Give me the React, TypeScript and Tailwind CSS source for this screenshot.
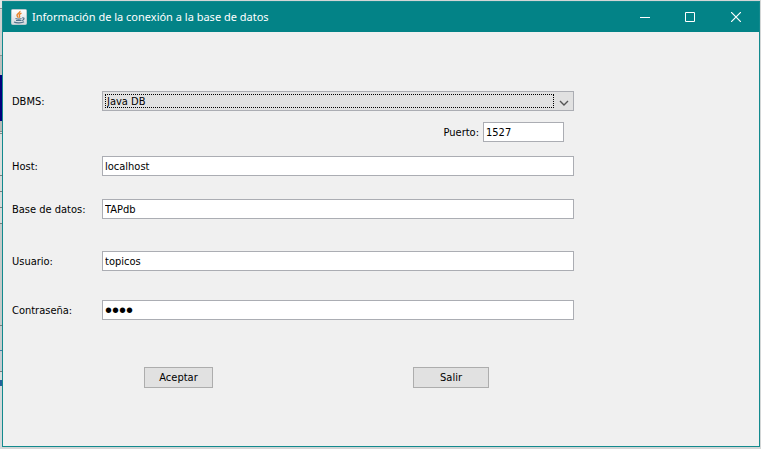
import type { ReactNode } from "react";

const fieldClass =
  "h-5 w-full min-w-0 rounded-none border border-[#abadb3] bg-white px-0.5 text-[11px] leading-4 text-black outline-none";

const passwordClass =
  "h-5 w-full min-w-0 rounded-none border border-[#abadb3] bg-white px-0.5 font-['Liberation_Sans',sans-serif] text-[20px] leading-4 text-black outline-none";

const leftEdge = [
  "h-2 bg-[#e4e6e5]",
  "h-px bg-[#8d9391]",
  "h-px bg-[#d5d8d7]",
  "h-[45px] bg-[#cdd1d0]",
  "h-px bg-[#8d9391]",
  "h-[19px] bg-[#bcbebd]",
  "h-[46px] bg-[#00007c]",
  "h-2.5 bg-[#b8b9b8]",
  "h-px bg-[#858a89]",
  "h-px bg-[#e0e0e0]",
  "h-px bg-[#858a89]",
  "h-[41px] bg-[#dcdedd]",
  "h-px bg-[#777c7b]",
  "h-[15px] bg-[#d8dada]",
  "h-px bg-[#777c7b]",
  "h-[15px] bg-[#d8dada]",
  "h-px bg-[#777c7b]",
  "h-[15px] bg-[#d8dada]",
  "h-px bg-[#777c7b]",
  "h-[101px] bg-[#c6caca]",
  "h-px bg-[#777c7b]",
  "h-6 bg-[#c9cdce]",
  "h-px bg-[#3b7ba5]",
  "h-5 bg-[#c6cbd2]",
  "h-px bg-[#777c7b]",
  "h-2 bg-[#d9dcdd]",
  "h-1.5 bg-[#24609a]",
  "flex-1 bg-[#d5d9db]",
];

function Row({ id, label, className, children }: { id: string; label: string; className: string; children: ReactNode }) {
  return (
    <div className={`flex items-center ${className}`}>
      <label htmlFor={id} className="w-[90px] shrink-0 pt-0.5 whitespace-nowrap">
        {label}
      </label>
      {children}
    </div>
  );
}

function JavaIcon() {
  return (
    <svg width="16" height="16" viewBox="0 0 16 16" className="shrink-0" aria-hidden="true">
      <defs>
        <linearGradient id="tile" x1="0" y1="0" x2="0" y2="1">
          <stop offset="0" stopColor="#ffffff" />
          <stop offset="1" stopColor="#d3dade" />
        </linearGradient>
      </defs>
      <rect x="0.5" y="0.5" width="15" height="15" rx="1" fill="url(#tile)" stroke="#b9c9cc" />
      <path d="M9 2C9.500 4 5.500 4.800 6 6.500C6.200 7.300 7 7.700 7 8.700M10.500 4.200C8.300 5 7.900 6 8.500 6.800C9 7.500 8.600 8 8.100 8.700" fill="none" stroke="#e8842c" strokeWidth="1.400" />
      <path d="M4.500 9.500C6.500 10.300 9.500 10.100 10.500 9.500M5 11.500H10.500M11.200 8.800C14 8.500 13.200 11 11 11.500M3 13C5 14.200 11 14.200 13 12.800" fill="none" stroke="#52738c" strokeWidth="1.200" />
    </svg>
  );
}

function TitleBar() {
  return (
    <header className="flex h-[30px] items-center bg-[#038387] pl-2 text-white">
      <JavaIcon />
      <h1 className="ml-[5px] min-w-0 flex-1 truncate font-['Noto_Sans','Open_Sans',sans-serif] text-[11px] font-normal">
        Información de la conexión a la base de datos
      </h1>
      <button type="button" aria-label="Minimizar" className="flex h-full w-11 items-center justify-center">
        <svg width="10" height="10" viewBox="0 0 10 10" stroke="currentColor" fill="none">
          <path d="M0 5.500H10" />
        </svg>
      </button>
      <button type="button" aria-label="Maximizar" className="flex h-full w-[46px] items-center justify-center">
        <svg width="10" height="10" viewBox="0 0 10 10" stroke="currentColor" fill="none">
          <path d="M0.500 0.500H9.500V9.500H0.500Z" />
        </svg>
      </button>
      <button type="button" aria-label="Cerrar" className="flex h-full w-[46px] items-center justify-center">
        <svg width="10" height="10" viewBox="0 0 10 10" stroke="currentColor" fill="none">
          <path d="M0 0L10 10M10 0L0 10" strokeWidth="1.200" />
        </svg>
      </button>
    </header>
  );
}

export default function App() {
  return (
    <div className="flex min-h-screen bg-[#d3d6d6] font-['DejaVu_Sans_Condensed','DejaVu_Sans',sans-serif] text-[11px] leading-4 text-black">
      <div className="flex w-0.5 shrink-0 flex-col" aria-hidden="true">
        {leftEdge.map((segment, i) => (
          <div key={i} className={segment} />
        ))}
      </div>
      <main className="mt-px mr-px mb-0.5 min-w-0 flex-1 border border-[#128a8e] bg-[#f0f0f0]">
        <TitleBar />
        <form className="max-w-[571px] pt-[59px] pl-[9px]" onSubmit={(e) => e.preventDefault()}>
          <Row id="dbms" label="DBMS:" className="">
            <div className="grid h-5 min-w-0 flex-1 grid-cols-[1fr_19px] items-center border border-[#abadb3] bg-[#e1e1e1]">
              <select
                id="dbms"
                defaultValue="java"
                className="col-span-2 col-start-1 row-start-1 ml-0.5 h-[18px] min-w-0 appearance-none bg-transparent px-0.5 pt-px text-[11px] leading-4 outline-none"
              >
                <option value="java">Java DB</option>
              </select>
              <span className="pointer-events-none col-start-1 row-start-1 ml-0.5 h-3.5 border border-dotted border-black" />
              <svg className="pointer-events-none col-start-2 row-start-1 mt-1 ml-[5px]" width="10" height="6" viewBox="0 0 10 6" aria-hidden="true">
                <path d="M1 1L5 5L9 1" fill="none" stroke="#555555" strokeWidth="1.400" />
              </svg>
            </div>
          </Row>
          <div className="mt-[11px] flex items-center justify-end pr-2.5">
            <label htmlFor="port" className="mr-1 pt-0.5">
              Puerto:
            </label>
            <div className="w-[81px]">
              <input id="port" type="text" defaultValue="1527" className={fieldClass} />
            </div>
          </div>
          <Row id="host" label="Host:" className="mt-3.5">
            <input id="host" type="text" defaultValue="localhost" className={fieldClass} />
          </Row>
          <Row id="database" label="Base de datos:" className="mt-[23px]">
            <input id="database" type="text" defaultValue="TAPdb" className={fieldClass} />
          </Row>
          <Row id="user" label="Usuario:" className="mt-8">
            <input id="user" type="text" defaultValue="topicos" className={fieldClass} />
          </Row>
          <Row id="password" label="Contraseña:" className="mt-[29px]">
            <input id="password" type="password" defaultValue="1234" className={passwordClass} />
          </Row>
          <div className="mt-[47px] flex justify-between pr-[85px] pl-[132px]">
            <button type="submit" className="h-[21px] w-[69px] border border-[#adadad] bg-[#e1e1e1]">
              Aceptar
            </button>
            <button type="button" className="h-[21px] w-[76px] border border-[#adadad] bg-[#e1e1e1]">
              Salir
            </button>
          </div>
        </form>
      </main>
    </div>
  );
}
